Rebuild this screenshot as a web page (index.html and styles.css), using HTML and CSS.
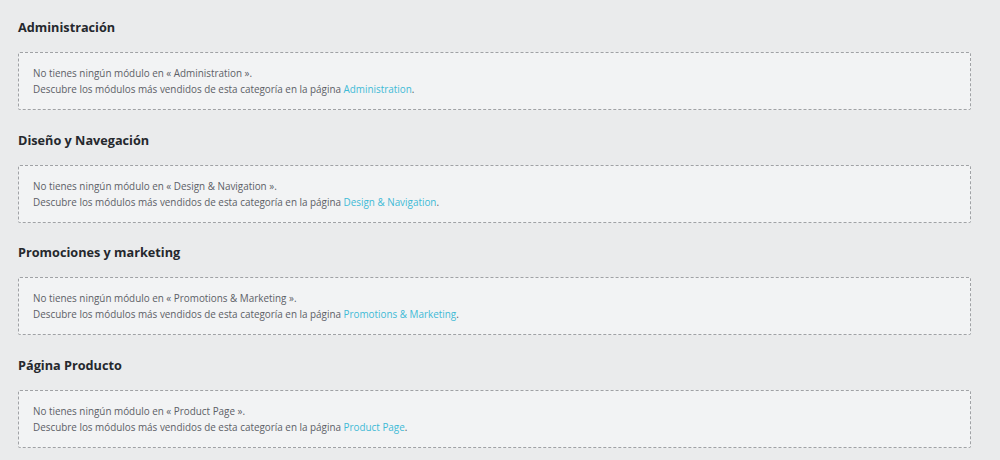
FILE: index.html
```html
<!DOCTYPE html>
<html lang="es">
<head>
<meta charset="utf-8">
<link rel="stylesheet" href="styles.css">
</head>
<body>
<main class="page">
  <section class="category">
    <h2 class="category-title">Administración</h2>
    <div class="empty-box">
      <p>No tienes ningún módulo en « Administration ».</p>
      <p>Descubre los módulos más vendidos de esta categoría en la página <a href="#">Administration</a>.</p>
    </div>
  </section>
  <section class="category">
    <h2 class="category-title">Diseño y Navegación</h2>
    <div class="empty-box">
      <p>No tienes ningún módulo en « Design &amp; Navigation ».</p>
      <p>Descubre los módulos más vendidos de esta categoría en la página <a href="#">Design &amp; Navigation</a>.</p>
    </div>
  </section>
  <section class="category">
    <h2 class="category-title">Promociones y marketing</h2>
    <div class="empty-box">
      <p>No tienes ningún módulo en « Promotions &amp; Marketing ».</p>
      <p>Descubre los módulos más vendidos de esta categoría en la página <a href="#">Promotions &amp; Marketing</a>.</p>
    </div>
  </section>
  <section class="category">
    <h2 class="category-title">Página Producto</h2>
    <div class="empty-box">
      <p>No tienes ningún módulo en « Product Page ».</p>
      <p>Descubre los módulos más vendidos de esta categoría en la página <a href="#">Product Page</a>.</p>
    </div>
  </section>
</main>
</body>
</html>
```

FILE: styles.css
```css
html, body {
  margin: 0;
  padding: 0;
}
body {
  background: #eaebec;
  font-family: "Open Sans", "Noto Sans", sans-serif;
  color: #363a41;
  overflow: hidden;
}
.page {
  display: flex;
  flex-direction: column;
  gap: 19.7px;
  padding: 17px 29px 0 18px;
}
.category {
  display: flex;
  flex-direction: column;
  gap: 15px;
}
.category-title {
  margin: 0;
  font-size: 12.7px;
  line-height: 20px;
  font-weight: 700;
  color: #25282d;
}
.empty-box {
  border: 1px dashed #a0a2a5;
  border-radius: 2px;
  background: #f2f3f4;
  padding: 12px 14px;
  font-size: 9.9px;
  line-height: 16px;
  color: #5c6066;
}
.empty-box p {
  margin: 0;
}
.empty-box a {
  color: #3ebad6;
  text-decoration: none;
}
```
